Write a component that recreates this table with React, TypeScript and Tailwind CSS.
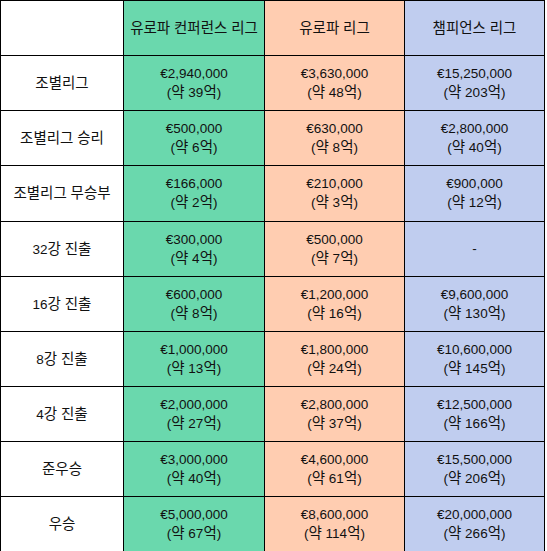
import React from "react";

const rows: { label: string; h: string; cells: [string, string][] }[] = [
  { label: "조별리그", h: "h-[55px]", cells: [["€2,940,000", "(약 39억)"], ["€3,630,000", "(약 48억)"], ["€15,250,000", "(약 203억)"]] },
  { label: "조별리그 승리", h: "h-[55px]", cells: [["€500,000", "(약 6억)"], ["€630,000", "(약 8억)"], ["€2,800,000", "(약 40억)"]] },
  { label: "조별리그 무승부", h: "h-[56px]", cells: [["€166,000", "(약 2억)"], ["€210,000", "(약 3억)"], ["€900,000", "(약 12억)"]] },
  { label: "32강 진출", h: "h-[55px]", cells: [["€300,000", "(약 4억)"], ["€500,000", "(약 7억)"], ["-", ""]] },
  { label: "16강 진출", h: "h-[55px]", cells: [["€600,000", "(약 8억)"], ["€1,200,000", "(약 16억)"], ["€9,600,000", "(약 130억)"]] },
  { label: "8강 진출", h: "h-[55px]", cells: [["€1,000,000", "(약 13억)"], ["€1,800,000", "(약 24억)"], ["€10,600,000", "(약 145억)"]] },
  { label: "4강 진출", h: "h-[55px]", cells: [["€2,000,000", "(약 27억)"], ["€2,800,000", "(약 37억)"], ["€12,500,000", "(약 166억)"]] },
  { label: "준우승", h: "h-[55px]", cells: [["€3,000,000", "(약 40억)"], ["€4,600,000", "(약 61억)"], ["€15,500,000", "(약 206억)"]] },
  { label: "우승", h: "h-[55px]", cells: [["€5,000,000", "(약 67억)"], ["€8,600,000", "(약 114억)"], ["€20,000,000", "(약 266억)"]] },
];

const bg = ["bg-[#6ad8ad]", "bg-[#ffcdb1]", "bg-[#c0cdef]"];

function K({ t }: { t: string }) {
  const parts = t.split(/([\uAC00-\uD7A3]+)/);
  return (
    <span>
      {parts.map((p, i) =>
        i % 2 === 1 ? (
          <span key={i} className="text-[14.5px] leading-[18px]">
            {p}
          </span>
        ) : (
          <React.Fragment key={i}>{p}</React.Fragment>
        )
      )}
    </span>
  );
}

export default function App() {
  return (
    <div className="w-[547px] h-[551px] overflow-hidden bg-white text-[13.5px] leading-[18px] text-[#111] font-['Liberation_Sans','Noto_Sans_CJK_KR',sans-serif]">
      <div className="grid grid-cols-[123px_141px_140px_140px] w-[545px] border-t border-l border-black">
        <div className="h-[55px] border-r border-b border-black bg-white" />
        <div className={`h-[55px] border-r border-b border-black ${bg[0]} flex items-center justify-center`}>
          <K t="유로파 컨퍼런스 리그" />
        </div>
        <div className={`h-[55px] border-r border-b border-black ${bg[1]} flex items-center justify-center`}>
          <K t="유로파 리그" />
        </div>
        <div className={`h-[55px] border-r border-b border-black ${bg[2]} flex items-center justify-center`}>
          <K t="챔피언스 리그" />
        </div>
        {rows.map((r) => (
          <React.Fragment key={r.label}>
            <div className={`${r.h} border-r border-b border-black bg-white flex items-center justify-center`}>
              <K t={r.label} />
            </div>
            {r.cells.map((c, i) => (
              <div
                key={i}
                className={`${r.h} border-r border-b border-black ${bg[i]} flex flex-col items-center justify-center text-center`}
              >
                <span>{c[0]}</span>
                {c[1] && <K t={c[1]} />}
              </div>
            ))}
          </React.Fragment>
        ))}
      </div>
    </div>
  );
}
